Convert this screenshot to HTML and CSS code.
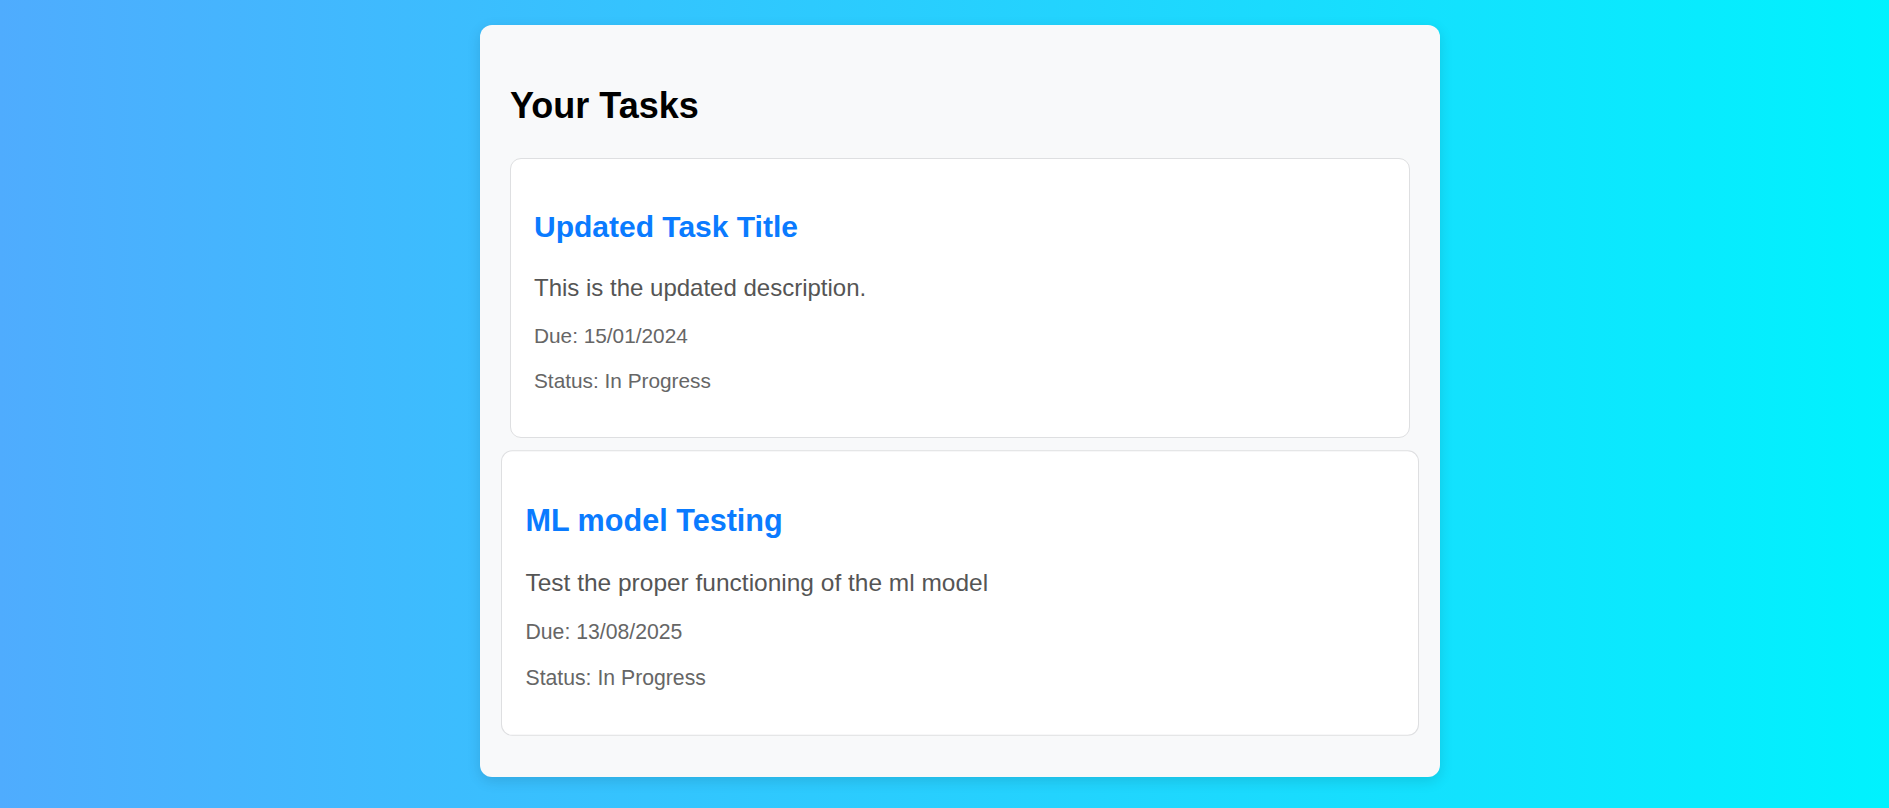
FILE: index.html
```html
<!DOCTYPE html>
<html lang="en">
<head>
<meta charset="utf-8">
<title>Your Tasks</title>
<link rel="stylesheet" href="styles.css">
</head>
<body>
  <main class="container">
    <h2 class="page-title">Your Tasks</h2>
    <div class="task-list">
      <div class="task-card">
        <h3 class="task-title">Updated Task Title</h3>
        <p class="task-desc">This is the updated description.</p>
        <p class="task-meta">Due: 15/01/2024</p>
        <p class="task-meta">Status: In Progress</p>
      </div>
      <div class="task-card is-hover">
        <h3 class="task-title">ML model Testing</h3>
        <p class="task-desc">Test the proper functioning of the ml model</p>
        <p class="task-meta">Due: 13/08/2025</p>
        <p class="task-meta">Status: In Progress</p>
      </div>
    </div>
  </main>
</body>
</html>
```

FILE: styles.css
```css
html, body {
  margin: 0;
  height: 100%;
}

body {
  background: linear-gradient(to right, #4facfe 0%, #00f2fe 100%);
  font-family: "Liberation Sans", Arial, sans-serif;
  padding: 25px 0 0 31px;
  box-sizing: border-box;
  overflow: hidden;
}

.container {
  width: 960px;
  margin: 0 auto;
  box-sizing: border-box;
  background: #f8f9fa;
  border-radius: 12px;
  padding: 30px 30px 44px;
  box-shadow: 0 4px 14px rgba(0, 0, 0, 0.12);
}

.page-title {
  font-size: 36px;
  font-weight: bold;
  color: #000;
  margin: 30px 0 31px;
  line-height: normal;
}

.task-list {
  display: flex;
  flex-direction: column;
  gap: 15px;
}

.task-card {
  background: #fff;
  border: 1px solid #dedfe1;
  border-radius: 11px;
  padding: 24px 23px;
}

.task-card.is-hover {
  transform: scale(1.02);
}

.task-title {
  font-size: 30px;
  font-weight: bold;
  color: #0a7bff;
  margin: 27px 0 30px;
  line-height: normal;
}

.task-desc {
  font-size: 24px;
  color: #555;
  margin: 0 0 22px;
  line-height: normal;
}

.task-meta {
  font-size: 20.8px;
  color: #666;
  margin: 0 0 21px;
  line-height: normal;
}

.task-meta:last-child {
  margin-bottom: 20px;
}
```
